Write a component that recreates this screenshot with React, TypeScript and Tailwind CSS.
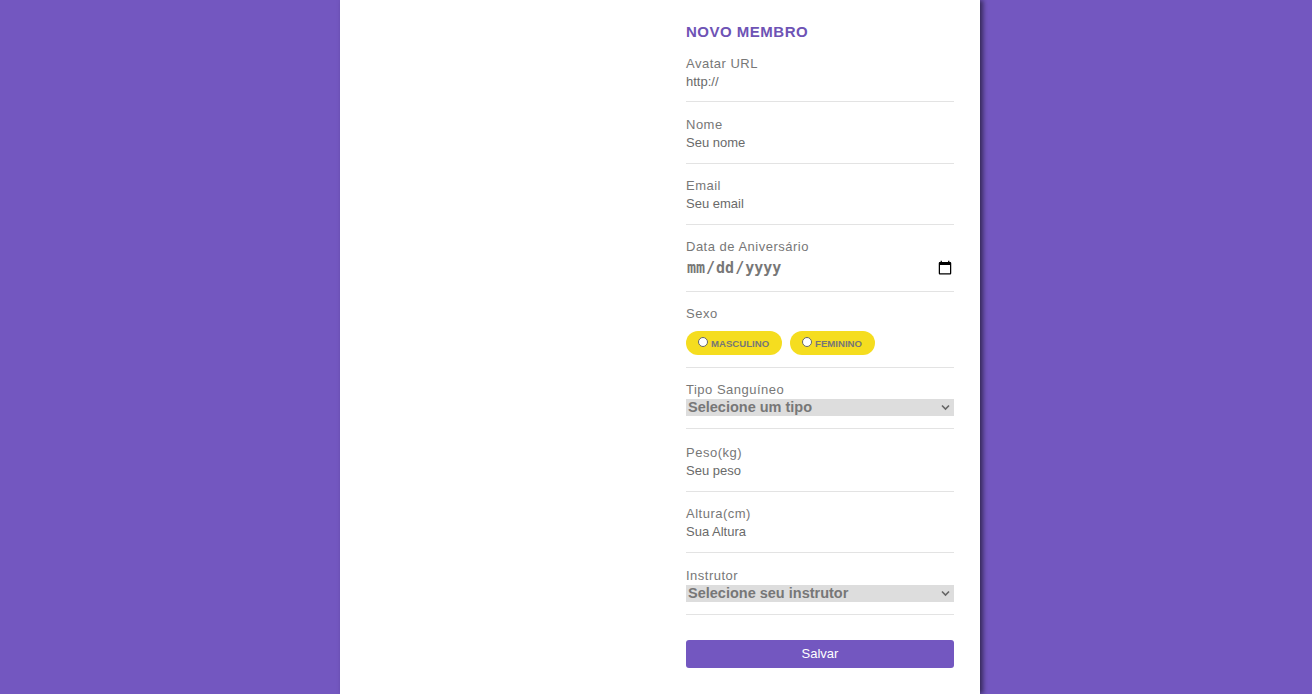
import React from "react";

const font = { fontFamily: '"Liberation Sans", Arial, sans-serif' };

function Field({ label, children, mb = "mb-[13px]" }: { label: string; children: React.ReactNode; mb?: string }) {
  return (
    <div className={`border-b border-[#e3e3e3] pb-[11px] ${mb}`}>
      <div className="text-[13px] leading-[18px] tracking-[0.5px] text-[#777]">{label}</div>
      {children}
    </div>
  );
}

function TextVal({ placeholder }: { placeholder: string }) {
  return (
    <input
      className="block w-full h-[18px] text-[13px] leading-[18px] text-[#6a6a6a] placeholder:text-[#6a6a6a] outline-none p-0"
      placeholder={placeholder}
      style={font}
    />
  );
}

function Pill({ label }: { label: string }) {
  return (
    <label className="flex items-center h-[24px] rounded-full bg-[#f5dd1f] pl-[12px] pr-[13px] gap-[3px]">
      <span className="w-[10px] h-[10px] rounded-full border border-[#666] bg-white mt-[-2px]" />
      <span className="text-[9.6px] font-bold text-[#777] mt-[2px]">{label}</span>
    </label>
  );
}

function Select({ text }: { text: string }) {
  return (
    <div className="relative">
      <select
        className="block w-full h-[17px] appearance-none bg-[#dddddd] text-[14.5px] leading-[17px] font-bold text-[#777] border-0 outline-none py-0 pl-[2px] pr-[16px]"
        style={font}
        defaultValue=""
      >
        <option value="">{text}</option>
      </select>
      <svg
        className="absolute right-[4px] top-[5px] pointer-events-none"
        width="9"
        height="7"
        viewBox="0 0 9 7"
      >
        <path d="M1 1.5 L4.5 5 L8 1.5" fill="none" stroke="#666" strokeWidth="1.6" />
      </svg>
    </div>
  );
}

export default function App() {
  return (
    <div className="min-h-[694px] w-full bg-[#7357c0] flex pl-[340px]" style={font}>
      <div className="w-[640px] bg-white shadow-[3px_0_5px_rgba(0,0,0,0.55)] flex">
        <div className="w-[320px]" />
        <div className="w-[320px] px-[26px] pt-[22px]">
          <h1 className="text-[15px] leading-[20px] font-bold tracking-[0.5px] text-[#6e53b5] mb-[13px]">NOVO MEMBRO</h1>
          <div className="border-b border-[#e3e3e3] pb-[10px] mb-[14px]">
            <div className="text-[13px] leading-[18px] tracking-[0.5px] text-[#777]">Avatar URL</div>
            <TextVal placeholder="http://" />
          </div>
          <Field label="Nome">
            <TextVal placeholder="Seu nome" />
          </Field>
          <div className="border-b border-[#e3e3e3] pb-[11px] mb-[13px]">
            <div className="text-[13px] leading-[18px] tracking-[0.5px] text-[#777] mt-[1px]">Email</div>
            <TextVal placeholder="Seu email" />
          </div>
          <div className="border-b border-[#e3e3e3] pb-[12px] mb-[13px]">
            <div className="text-[13px] leading-[18px] tracking-[0.5px] text-[#777]">Data de Aniversário</div>
            <input
              type="date"
              className="block w-full h-[22px] mt-[1px] p-0 text-[15px] font-bold text-[#777] outline-none [&::-webkit-calendar-picker-indicator]:w-[16px] [&::-webkit-calendar-picker-indicator]:h-[16px] [&::-webkit-calendar-picker-indicator]:p-0 [&::-webkit-calendar-picker-indicator]:mr-[1px]"
              style={{ fontFamily: '"DejaVu Sans Mono", monospace' }}
            />
          </div>
          <div className="border-b border-[#e3e3e3] pb-[12px] mb-[13px]">
            <div className="text-[13px] leading-[18px] tracking-[0.5px] text-[#777]">Sexo</div>
            <div className="flex gap-[8px] mt-[8px]">
              <Pill label="MASCULINO" />
              <Pill label="FEMININO" />
            </div>
          </div>
          <div className="border-b border-[#e3e3e3] pb-[12px] mb-[15px]">
            <div className="text-[13px] leading-[18px] tracking-[0.5px] text-[#777] mt-[1px]">Tipo Sanguíneo</div>
            <Select text="Selecione um tipo" />
          </div>
          <Field label="Peso(kg)">
            <TextVal placeholder="Seu peso" />
          </Field>
          <Field label="Altura(cm)" mb="mb-[14px]">
            <TextVal placeholder="Sua Altura" />
          </Field>
          <div className="border-b border-[#e3e3e3] pb-[12px] mb-[25px]">
            <div className="text-[13px] leading-[18px] tracking-[0.5px] text-[#777] mt-[1px]">Instrutor</div>
            <Select text="Selecione seu instrutor" />
          </div>
          <button className="w-full h-[28px] rounded-[3px] bg-[#7357c0] text-white text-[13px]">Salvar</button>
        </div>
      </div>
    </div>
  );
}
